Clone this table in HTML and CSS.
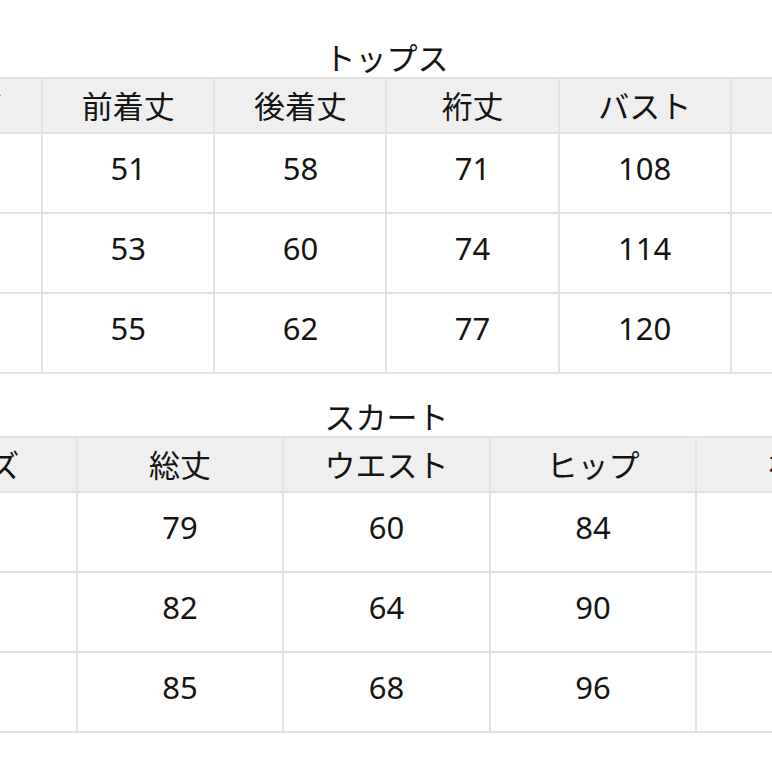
FILE: index.html
```html
<!DOCTYPE html>
<html lang="ja">
<head>
<meta charset="utf-8">
<title>サイズ表</title>
<link rel="stylesheet" href="styles.css">
</head>
<body>
<div class="sheet">
  <section class="chart">
    <h2 class="chart-title">トップス</h2>
    <table class="size-table">
      <thead>
        <tr><th>サイズ</th><th>前着丈</th><th>後着丈</th><th>裄丈</th><th>バスト</th><th>袖口</th></tr>
      </thead>
      <tbody>
        <tr><td>S</td><td>51</td><td>58</td><td>71</td><td>108</td><td>26</td></tr>
        <tr><td>M</td><td>53</td><td>60</td><td>74</td><td>114</td><td>27</td></tr>
        <tr><td>L</td><td>55</td><td>62</td><td>77</td><td>120</td><td>28</td></tr>
      </tbody>
    </table>
  </section>
  <section class="chart">
    <h2 class="chart-title">スカート</h2>
    <table class="size-table">
      <thead>
        <tr><th>サイズ</th><th>総丈</th><th>ウエスト</th><th>ヒップ</th><th>裾幅</th></tr>
      </thead>
      <tbody>
        <tr><td>S</td><td>79</td><td>60</td><td>84</td><td>200</td></tr>
        <tr><td>M</td><td>82</td><td>64</td><td>90</td><td>210</td></tr>
        <tr><td>L</td><td>85</td><td>68</td><td>96</td><td>220</td></tr>
      </tbody>
    </table>
  </section>
</div>
</body>
</html>
```
FILE: styles.css
```css
html, body {
  margin: 0;
  padding: 0;
  background: #ffffff;
  overflow: hidden;
}

body {
  font-family: "Noto Sans", "Noto Sans CJK JP", sans-serif;
  color: #141414;
}

.sheet {
  width: 1035px;
  margin-left: -131px;
  padding-top: 38px;
}

.chart + .chart {
  margin-top: 23px;
}

.chart-title {
  margin: 0;
  height: 39px;
  line-height: 41px;
  font-size: 31px;
  font-weight: 400;
  text-align: center;
}

.size-table {
  width: 100%;
  table-layout: fixed;
  border-collapse: collapse;
}

.size-table th,
.size-table td {
  box-sizing: border-box;
  border: 2px solid #e2e2e2;
  text-align: center;
  font-size: 31px;
  font-weight: 400;
}

.size-table th {
  height: 55px;
  padding: 0 0 2px;
  background: #efefef;
}

.size-table td {
  height: 80px;
  padding: 0 0 10px;
  background: #ffffff;
}
```
